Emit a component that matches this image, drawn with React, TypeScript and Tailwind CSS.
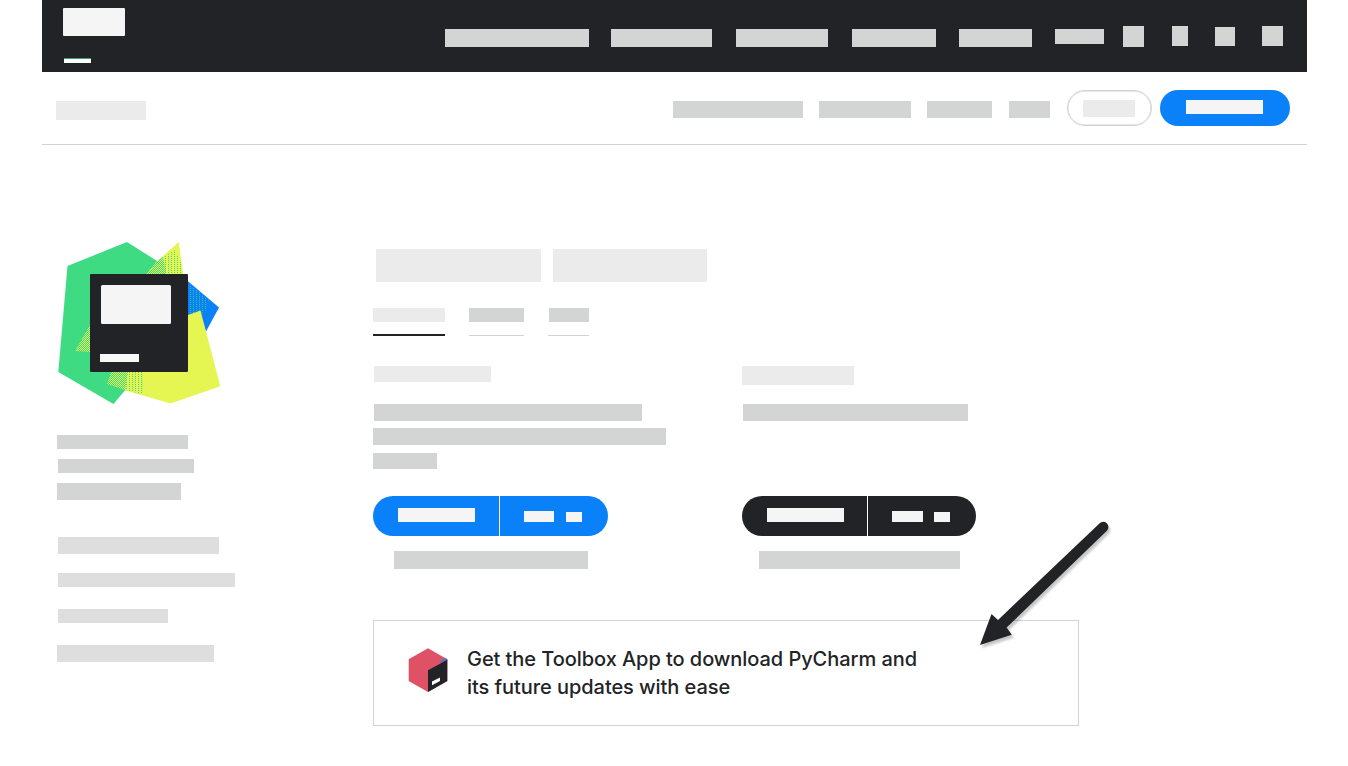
function Block({ className }: { className: string }) {
  return <div className={`shrink-0 ${className}`} />;
}

function PyCharmLogo() {
  return (
    <svg className="block h-[162px] w-[163px]" viewBox="58 242 163 162" aria-hidden="true">
      <defs>
        <pattern id="dots" width="3" height="2" patternUnits="userSpaceOnUse" shapeRendering="crispEdges">
          <rect width="3" height="2" fill="#e5f551" />
          <rect width="1" height="1" fill="#3fdb83" />
        </pattern>
        <pattern id="checks" width="2" height="2" patternUnits="userSpaceOnUse" shapeRendering="crispEdges">
          <rect width="1" height="1" fill="#e5f551" />
          <rect x="1" y="1" width="1" height="1" fill="#e5f551" />
        </pattern>
        <pattern id="blueDots" width="3" height="2" patternUnits="userSpaceOnUse" shapeRendering="crispEdges">
          <rect width="3" height="2" fill="#0a81f8" />
          <rect x="1" width="1" height="1" fill="#2fc890" />
        </pattern>
      </defs>
      <polygon points="127,242 157,261 165,280 165,372 127,388 113.5,404 58.3,372 67.5,266" fill="#3fdb83" />
      <polygon points="178.7,242 183.3,275 146,275 157,261.5" fill="#e5f551" />
      <polygon points="175,250 181,262 182,275 146,275 157,261.5" fill="url(#dots)" />
      <polygon points="157,261.5 163,257 166,275 147,275" fill="#3fdb83" />
      <polygon points="157,261.5 163,257 166,275 147,275" fill="url(#checks)" />
      <polygon points="188,281.3 219,307.5 206,331.5 200,315 188,316" fill="#0a81f8" />
      <polygon points="190,284 209,300 204,316 200,311 190,315" fill="url(#blueDots)" />
      <polygon points="188,315 200.5,310.5 220.3,386.3 170.5,403.5 124,390 130,372 188,372" fill="#e5f551" />
      <polygon points="107,384 111,372 143,372 142,392 125,390" fill="#3fdb83" />
      <polygon points="107,384 111,372 143,372 142,394 125,390" fill="url(#checks)" />
      <polygon points="128,372 143,372 142,394 125,390" fill="url(#dots)" />
      <polygon points="90,325 90,352 75,351" fill="url(#checks)" />
      <rect x="90" y="274" width="98" height="98" rx="1" fill="#222326" />
      <rect x="101" y="285" width="70" height="39" rx="1.5" fill="#f5f5f5" />
      <rect x="100" y="354" width="39" height="8" fill="#f7f7f7" />
    </svg>
  );
}

function ToolboxIcon() {
  return (
    <svg className="block h-11 w-10 shrink-0" viewBox="408 648 40 44" aria-hidden="true">
      <polygon points="428,648.3 447.3,659.3 447.3,681 428,692 408.7,681 408.7,659.3" fill="#df5265" />
      <polygon points="440,661 445,657.8 447.3,659.3 447.3,660.5 441,663" fill="#5a72c4" />
      <polygon points="428,670.3 447.3,659.8 447.3,681 428,692" fill="#222326" />
      <polygon points="432,681.5 440,677.5 440,681 432,685.3" fill="#ffffff" />
    </svg>
  );
}

function Arrow() {
  return (
    <svg
      className="pointer-events-none absolute top-[515px] left-[970px] h-[145px] w-[150px]"
      viewBox="970 515 150 145"
      aria-hidden="true"
    >
      <path
        d="M980 645 L991.5 614 L998 620 L1099.4 523.4 A5.2 5.2 0 0 1 1106.9 530.7 L1006.6 627.6 L1011.8 634.8 Z"
        fill="#222326"
        className="drop-shadow-[2px_3px_1px_rgba(0,0,0,0.22)]"
      />
    </svg>
  );
}

function Header() {
  return (
    <header className="flex h-[72px] items-start bg-[#222326] pl-[21px]">
      <div className="w-[382px] pt-2">
        <Block className="h-7 w-[62px] rounded-[1px] bg-[#f5f5f5]" />
        <Block className="mt-[22px] ml-px h-[5px] w-[27px] border-t border-[#36a568] bg-white" />
      </div>
      <nav className="flex items-start pt-[26px]">
        <Block className="mt-[3px] mr-[22px] h-[18px] w-36 bg-[#d3d5d4]" />
        <Block className="mt-[3px] mr-6 h-[18px] w-[101px] bg-[#d3d5d4]" />
        <Block className="mt-[3px] mr-6 h-[18px] w-[92px] bg-[#d3d5d4]" />
        <Block className="mt-[3px] mr-[23px] h-[18px] w-[84px] bg-[#d3d5d4]" />
        <Block className="mt-[3px] mr-[23px] h-[18px] w-[73px] bg-[#d3d5d4]" />
        <Block className="mt-[3px] mr-[19px] h-[15px] w-[49px] bg-[#d3d5d4]" />
        <Block className="mr-7 h-[21px] w-[21px] bg-[#d3d5d4]" />
        <Block className="mr-[27px] h-5 w-4 bg-[#d3d5d4]" />
        <Block className="mt-px mr-[27px] h-[19px] w-5 bg-[#d3d5d4]" />
        <Block className="h-5 w-[21px] bg-[#d3d5d4]" />
      </nav>
    </header>
  );
}

function ProductBar() {
  return (
    <div className="flex h-[73px] items-start justify-between border-b border-[#d3d3d3] pt-[18px] pr-[17px] pl-[14px]">
      <Block className="mt-[11px] h-[19px] w-[90px] bg-[#ebebeb]" />
      <div className="flex items-start">
        <Block className="mt-[11px] mr-4 h-[17px] w-[130px] bg-[#d3d5d4]" />
        <Block className="mt-[11px] mr-4 h-[17px] w-[92px] bg-[#d3d5d4]" />
        <Block className="mt-[11px] mr-[17px] h-[17px] w-[65px] bg-[#d3d5d4]" />
        <Block className="mt-[11px] mr-[17px] h-[17px] w-[41px] bg-[#d3d5d4]" />
        <button className="mr-2 flex h-9 w-[85px] items-start rounded-full border border-[#d3d3d3] pt-[9px] pl-[15px] shadow-[inset_0_0_0_0.5px_#d3d3d3]">
          <Block className="h-[17px] w-[52px] bg-[#ebebeb]" />
        </button>
        <button className="flex h-9 w-[130px] items-start rounded-full bg-[#0a81f8] pt-2.5 pl-[26px]">
          <Block className="h-3.5 w-[77px] bg-[#f5f5f5]" />
        </button>
      </div>
    </div>
  );
}

function Sidebar() {
  return (
    <aside className="w-[331px] shrink-0 pt-[97px] pl-[15px]">
      <div className="pl-px">
        <PyCharmLogo />
      </div>
      <Block className="mt-[31px] h-3.5 w-[131px] bg-[#d3d5d4]" />
      <Block className="mt-2.5 ml-px h-3.5 w-[136px] bg-[#d3d5d4]" />
      <Block className="mt-2.5 h-[17px] w-[124px] bg-[#d3d5d4]" />
      <Block className="mt-[37px] ml-px h-[17px] w-[161px] bg-[#dedede]" />
      <Block className="mt-[19px] ml-px h-3.5 w-[177px] bg-[#dedede]" />
      <Block className="mt-[22px] ml-px h-3.5 w-[110px] bg-[#dedede]" />
      <Block className="mt-[22px] h-[17px] w-[157px] bg-[#dedede]" />
    </aside>
  );
}

function Editions() {
  return (
    <div className="flex h-[238px] pt-[30px]">
      <section className="w-[369px] shrink-0">
        <Block className="ml-px h-4 w-[117px] bg-[#ebebeb]" />
        <Block className="mt-[22px] ml-px h-[17px] w-[268px] bg-[#d3d5d4]" />
        <Block className="mt-[7px] h-[17px] w-[293px] bg-[#d3d5d4]" />
        <Block className="mt-2 h-4 w-16 bg-[#d3d5d4]" />
        <div className="mt-[27px] flex h-10 w-[235px] overflow-hidden rounded-full bg-[#0a81f8]">
          <button className="flex w-[127px] items-start border-r border-white pt-3 pl-[25px]">
            <Block className="h-3.5 w-[77px] bg-[#f5f5f5]" />
          </button>
          <button className="flex flex-1 items-start gap-3 pt-[15px] pl-6">
            <Block className="h-[11px] w-[30px] bg-[#f5f5f5]" />
            <Block className="mt-px h-2.5 w-4 bg-[#f5f5f5]" />
          </button>
        </div>
        <Block className="mt-[15px] ml-[21px] h-[18px] w-[194px] bg-[#d3d5d4]" />
      </section>
      <section>
        <Block className="h-[19px] w-28 bg-[#ebebeb]" />
        <Block className="mt-[19px] ml-px h-[17px] w-[225px] bg-[#d3d5d4]" />
        <div className="mt-[75px] flex h-10 w-[234px] overflow-hidden rounded-full bg-[#222326]">
          <button className="flex w-[126px] items-start border-r border-white pt-3 pl-[25px]">
            <Block className="h-3.5 w-[77px] bg-[#f5f5f5]" />
          </button>
          <button className="flex flex-1 items-start gap-[11px] pt-[15px] pl-6">
            <Block className="h-[11px] w-[31px] bg-[#f5f5f5]" />
            <Block className="mt-px h-2.5 w-4 bg-[#f5f5f5]" />
          </button>
        </div>
        <Block className="mt-[15px] ml-[17px] h-[18px] w-[201px] bg-[#d3d5d4]" />
      </section>
    </div>
  );
}

function ToolboxCard() {
  return (
    <div className="mt-[46px] flex h-[106px] w-[706px] items-start border border-[#d3d3d3] pt-[27px] pl-[34px]">
      <ToolboxIcon />
      <div className="-mt-[3px] ml-[19px] font-['Inter','Liberation_Sans',sans-serif] text-[20px] leading-7 font-[550] whitespace-nowrap text-[#222326]">
        <p className="tracking-[-0.06px]">Get the Toolbox App to download PyCharm and</p>
        <p className="tracking-[-0.06px]">its future updates with ease</p>
      </div>
    </div>
  );
}

export default function App() {
  return (
    <div className="relative h-[766px] w-[1348px] overflow-hidden bg-white pl-[42px]">
      <div className="w-[1265px]">
        <Header />
        <ProductBar />
        <div className="flex">
          <Sidebar />
          <main className="pt-[104px]">
            <div className="flex gap-3 pl-[3px]">
              <Block className="h-[33px] w-[165px] rounded-[1px] bg-[#ebebeb]" />
              <Block className="h-[33px] w-[154px] rounded-[1px] bg-[#ebebeb]" />
            </div>
            <div className="mt-[26px] flex h-7 items-stretch">
              <div className="mr-6 w-[72px] border-b-2 border-[#222326]">
                <Block className="h-3.5 bg-[#ebebeb]" />
              </div>
              <div className="mr-6 w-[55px] border-b border-[#d3d3d3]">
                <Block className="h-3.5 bg-[#d3d5d4]" />
              </div>
              <div className="w-[41px] border-b border-[#d3d3d3] pl-px">
                <Block className="h-3.5 bg-[#d3d5d4]" />
              </div>
            </div>
            <Editions />
            <ToolboxCard />
          </main>
        </div>
      </div>
      <Arrow />
    </div>
  );
}
